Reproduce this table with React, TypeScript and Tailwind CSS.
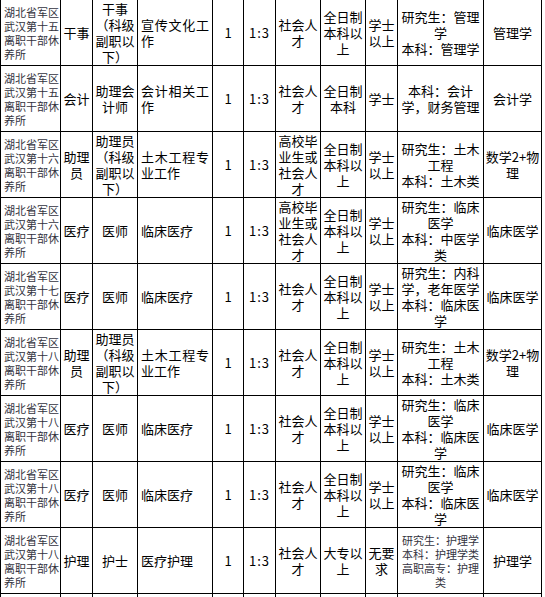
import React from "react"

type Row = {
  unit: string
  kind: string
  post: string
  duty: string
  count: string
  ratio: string
  source: string
  edu: string
  degree: string
  major: string[]
  smallMajor?: boolean
  exam: string
}

const rows: Row[] = [
  {
    unit: "湖北省军区武汉第十五离职干部休养所",
    kind: "干事",
    post: "干事（科级副职以下）",
    duty: "宣传文化工作",
    count: "1",
    ratio: "1:3",
    source: "社会人才",
    edu: "全日制本科以上",
    degree: "学士以上",
    major: ["研究生：管理学", "本科：管理学"],
    exam: "管理学",
  },
  {
    unit: "湖北省军区武汉第十五离职干部休养所",
    kind: "会计",
    post: "助理会计师",
    duty: "会计相关工作",
    count: "1",
    ratio: "1:3",
    source: "社会人才",
    edu: "全日制本科",
    degree: "学士",
    major: ["本科：会计学，财务管理"],
    exam: "会计学",
  },
  {
    unit: "湖北省军区武汉第十六离职干部休养所",
    kind: "助理员",
    post: "助理员（科级副职以下）",
    duty: "土木工程专业工作",
    count: "1",
    ratio: "1:3",
    source: "高校毕业生或社会人才",
    edu: "全日制本科以上",
    degree: "学士以上",
    major: ["研究生：土木工程", "本科：土木类"],
    exam: "数学2+物理",
  },
  {
    unit: "湖北省军区武汉第十六离职干部休养所",
    kind: "医疗",
    post: "医师",
    duty: "临床医疗",
    count: "1",
    ratio: "1:3",
    source: "高校毕业生或社会人才",
    edu: "全日制本科以上",
    degree: "学士以上",
    major: ["研究生：临床医学", "本科：中医学类"],
    exam: "临床医学",
  },
  {
    unit: "湖北省军区武汉第十七离职干部休养所",
    kind: "医疗",
    post: "医师",
    duty: "临床医疗",
    count: "1",
    ratio: "1:3",
    source: "社会人才",
    edu: "全日制本科以上",
    degree: "学士以上",
    major: ["研究生：内科学，老年医学", "本科：临床医学"],
    exam: "临床医学",
  },
  {
    unit: "湖北省军区武汉第十八离职干部休养所",
    kind: "助理员",
    post: "助理员（科级副职以下）",
    duty: "土木工程专业工作",
    count: "1",
    ratio: "1:3",
    source: "社会人才",
    edu: "全日制本科以上",
    degree: "学士以上",
    major: ["研究生：土木工程", "本科：土木类"],
    exam: "数学2+物理",
  },
  {
    unit: "湖北省军区武汉第十八离职干部休养所",
    kind: "医疗",
    post: "医师",
    duty: "临床医疗",
    count: "1",
    ratio: "1:3",
    source: "社会人才",
    edu: "全日制本科以上",
    degree: "学士以上",
    major: ["研究生：临床医学", "本科：临床医学"],
    exam: "临床医学",
  },
  {
    unit: "湖北省军区武汉第十八离职干部休养所",
    kind: "医疗",
    post: "医师",
    duty: "临床医疗",
    count: "1",
    ratio: "1:3",
    source: "社会人才",
    edu: "全日制本科以上",
    degree: "学士以上",
    major: ["研究生：临床医学", "本科：临床医学"],
    exam: "临床医学",
  },
  {
    unit: "湖北省军区武汉第十八离职干部休养所",
    kind: "护理",
    post: "护士",
    duty: "医疗护理",
    count: "1",
    ratio: "1:3",
    source: "社会人才",
    edu: "大专以上",
    degree: "无要求",
    major: ["研究生：护理学", "本科：护理学类", "高职高专：护理类"],
    smallMajor: true,
    exam: "护理学",
  },
]

const cell = "flex h-full items-center border-r border-black"

// column widths, each including its right border
const widths = [
  "w-[60px]",
  "w-[32px]",
  "w-[45px]",
  "w-[75px]",
  "w-[31px]",
  "w-[32px]",
  "w-[45px]",
  "w-[45px]",
  "w-[32px]",
  "w-[86px]",
  "w-[58px]",
]

function TableRow({ row }: { row: Row }) {
  return (
    <div className="flex h-[66px] border-b border-black">
      <div className={`${cell} w-[60px] pl-[3px] text-[11px] leading-[14px] text-[#333340]`}>
        <span>{row.unit}</span>
      </div>
      <div className={`${cell} w-[32px] justify-center px-[2px] text-center`}>
        <span>{row.kind}</span>
      </div>
      <div className={`${cell} w-[45px] justify-center px-[2px] text-center`}>
        <span>{row.post}</span>
      </div>
      <div className={`${cell} w-[75px] px-[3px]`}>
        <span className="block w-full text-justify">{row.duty}</span>
      </div>
      <div className={`${cell} w-[31px] justify-center text-center`}>
        <span>{row.count}</span>
      </div>
      <div className={`${cell} w-[32px] justify-center text-center`}>
        <span className="tracking-[1px]">{row.ratio}</span>
      </div>
      <div className={`${cell} w-[45px] justify-center px-[2px] text-center`}>
        <span>{row.source}</span>
      </div>
      <div className={`${cell} w-[45px] justify-center px-[2px] text-center`}>
        <span>{row.edu}</span>
      </div>
      <div className={`${cell} w-[32px] justify-center px-[2px] text-center`}>
        <span>{row.degree}</span>
      </div>
      <div className={`${cell} w-[86px] justify-center px-[3px] text-center`}>
        <div
          className={
            row.smallMajor ? "text-[11px] leading-[14px] text-[#333340]" : ""
          }
        >
          {row.major.map((m) => (
            <div key={m}>{m}</div>
          ))}
        </div>
      </div>
      <div className={`${cell} w-[58px] justify-center text-center`}>
        <span>{row.exam}</span>
      </div>
    </div>
  )
}

export default function App() {
  return (
    <div className="h-[597px] w-[545px] overflow-hidden bg-white">
      <div
        className="-mt-px w-[542px] border-t border-l border-black text-[13px] leading-[16px] text-black"
        style={{ fontFamily: '"Noto Sans CJK SC", "Liberation Sans", sans-serif' }}
      >
        {rows.map((row, i) => (
          <TableRow key={i} row={row} />
        ))}
        {/* next row, cut off by the window */}
        <div className="flex h-[66px] border-b border-black">
          {widths.map((w, i) => (
            <div key={i} className={`${cell} ${w}`} />
          ))}
        </div>
      </div>
    </div>
  )
}
